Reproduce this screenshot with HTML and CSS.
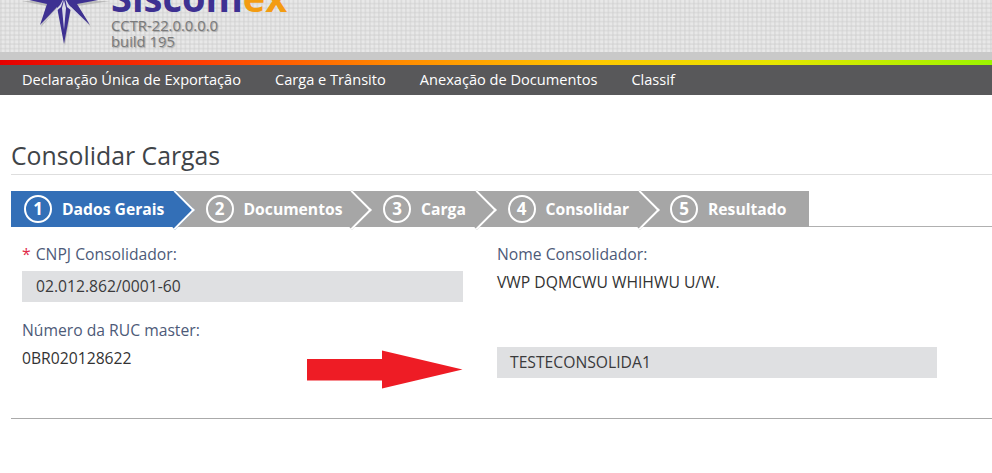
FILE: index.html
```html
<!DOCTYPE html>
<html lang="pt-BR">
<head>
<meta charset="utf-8">
<title>Consolidar Cargas</title>
<link rel="stylesheet" href="styles.css">
</head>
<body>
<header class="masthead">
  <svg class="star" width="111" height="52" viewBox="0 0 111 52" aria-hidden="true">
    <path class="star-shadow" d="M22 1 L46 6 L41 27 L58 8 L65 46 L71 8 L91 27 L78 6 L110 1 Z"/>
    <path class="star-body" d="M20 -2 L47 4 L40 25 L57 7 L64 44 L71 7 L90 25 L77 4 L109 -2 Z"/>
    <path class="star-ray" d="M64 -2 L60 5 L41 25 L61 7 Z M65 -2 L69 5 L89 25 L67 7 Z"/>
    <path class="star-ray" d="M64 0 L62 8 L64 30 L66 8 Z"/>
  </svg>
  <div class="brand">
    <div class="wordmark">Siscom<span class="wordmark-accent">ex</span></div>
    <div class="version">CCTR-22.0.0.0.0</div>
    <div class="version">build 195</div>
  </div>
</header>
<div class="band"></div>
<div class="rainbow"></div>
<nav class="menu">
  <a class="menu-item">Declaração Única de Exportação</a>
  <a class="menu-item">Carga e Trânsito</a>
  <a class="menu-item">Anexação de Documentos</a>
  <a class="menu-item">Classif</a>
</nav>
<main class="page">
  <h1 class="title">Consolidar Cargas</h1>
  <div class="steps-row">
    <ol class="steps">
      <li class="step step-1 is-active"><span class="num">1</span><span class="step-label">Dados Gerais</span></li>
      <li class="step step-2"><span class="num">2</span><span class="step-label">Documentos</span></li>
      <li class="step step-3"><span class="num">3</span><span class="step-label">Carga</span></li>
      <li class="step step-4"><span class="num">4</span><span class="step-label">Consolidar</span></li>
      <li class="step step-5"><span class="num">5</span><span class="step-label">Resultado</span></li>
    </ol>
  </div>
  <section class="form">
    <div class="field">
      <div class="label"><span class="req">*</span> CNPJ Consolidador:</div>
      <div class="input">02.012.862/0001-60</div>
    </div>
    <div class="field">
      <div class="label">Nome Consolidador:</div>
      <div class="value">VWP DQMCWU WHIHWU U/W.</div>
    </div>
    <div class="field">
      <div class="label">Número da RUC master:</div>
      <div class="value">0BR020128622</div>
    </div>
    <div class="field field-end">
      <div class="input">TESTECONSOLIDA1</div>
    </div>
    <svg class="arrow" width="156" height="40" viewBox="0 0 156 40" aria-hidden="true">
      <path d="M0 9 H75 V0.5 L155.500 19.500 L75 38.500 V30.500 H0 Z"/>
    </svg>
  </section>
  <hr class="rule">
</main>
</body>
</html>
```
FILE: styles.css
```css
* { box-sizing: border-box; }
html, body { margin: 0; padding: 0; }
body {
  width: 992px;
  height: 473px;
  overflow: hidden;
  background: #fff;
  font-family: "Open Sans", "Noto Sans", sans-serif;
  font-size: 15.7px;
  color: #3a3a3c;
}
.masthead {
  height: 52px;
  display: flex;
  overflow: hidden;
  background-color: #e8e8e8;
  background-image:
    linear-gradient(90deg, rgba(205,205,205,.45) 0 2px, transparent 2px),
    linear-gradient(0deg, rgba(205,205,205,.45) 0 2px, transparent 2px);
  background-size: 4.500px 4.500px;
}
.star { flex: none; }
.star-shadow { fill: #9a9a9a; opacity: .55; }
.star-body { fill: #3e3192; }
.star-ray { fill: #d9d9e6; }
.brand { display: flex; flex-direction: column; }
.wordmark {
  margin-top: -34px;
  height: 51px;
  font-size: 38px;
  line-height: 63px;
  font-weight: 700;
  color: #3e3192;
}
.wordmark-accent { color: #f39c12; }
.version {
  font-size: 14.800px;
  line-height: 16px;
  color: #7a7a7a;
  text-shadow: 1px 1px 1px rgba(0,0,0,.25);
}
.band { height: 8px; background: #c9c9c9; }
.rainbow {
  height: 5px;
  background: linear-gradient(90deg, #e60000 0%, #ff3c00 20%, #ff8a00 40%, #ffc800 60%, #e6e600 78%, #9cf500 100%);
}
.menu {
  height: 30px;
  display: flex;
  align-items: center;
  gap: 34px;
  padding: 0 0 1px 22px;
  background: #58585a;
}
.menu-item { color: #fff; font-size: 14.600px; line-height: 29px; }
.page { padding: 0 0 0 11px; }
.title {
  margin: 43px 0 0;
  height: 37px;
  font-size: 24.800px;
  line-height: 35px;
  font-weight: 400;
  color: #3f4448;
  border-bottom: 1px solid #dedede;
}
.steps-row {
  margin-top: 16px;
  height: 36px;
  border-bottom: 1px solid #b0b0b0;
}
.steps {
  display: flex;
  width: 798px;
  height: 36px;
  margin: 0;
  padding: 0;
  list-style: none;
}
.step {
  position: relative;
  display: flex;
  align-items: center;
  height: 36px;
  padding-left: 13px;
  background: #a6a6a6;
  color: #fff;
  font-weight: 700;
  font-size: 15.700px;
}
.step::after {
  content: "";
  position: absolute;
  top: 5px;
  right: -13px;
  width: 26px;
  height: 26px;
  background: inherit;
  border-top: 2px solid #fff;
  border-right: 2px solid #fff;
  transform: rotate(45deg);
  z-index: 1;
}
.step-1 { width: 165px; z-index: 5; padding-left: 13px; }
.step-2 { width: 177px; z-index: 4; padding-left: 29.500px; }
.step-3 { width: 125px; z-index: 3; padding-left: 30px; }
.step-4 { width: 163px; z-index: 2; padding-left: 29.500px; }
.step-5 { width: 168px; padding-left: 29px; }
.step-5::after { display: none; }
.is-active { background: #336fb7; }
.num {
  flex: none;
  width: 28px;
  height: 28px;
  margin-right: 10px;
  border: 2px solid #fff;
  border-radius: 50%;
  font-size: 17px;
  line-height: 24px;
  text-align: center;
}
.step-label { position: relative; z-index: 2; white-space: nowrap; }
.form {
  position: relative;
  display: grid;
  grid-template-columns: 441px 440px;
  column-gap: 34px;
  grid-template-rows: 75px 67px;
  margin: 17px 0 0 11px;
}
.label { line-height: 20px; color: #4d5a78; }
.req { color: #e0294a; margin-right: 1px; }
.input {
  height: 31px;
  margin-top: 7px;
  padding-left: 14px;
  background: #dfe0e2;
  line-height: 31px;
  color: #3a3a3c;
}
.value { margin-top: 8px; line-height: 20px; color: #333; }
.field:nth-child(3) { padding-top: 1px; }
.field-end { padding-top: 21px; }
.field-end .input { padding-left: 13px; }
.arrow {
  position: absolute;
  left: 285px;
  top: 106px;
}
.arrow path { fill: #ee1c25; }
.rule {
  margin: 32px 0 0;
  border: 0;
  border-top: 1px solid #aaa;
}
```
